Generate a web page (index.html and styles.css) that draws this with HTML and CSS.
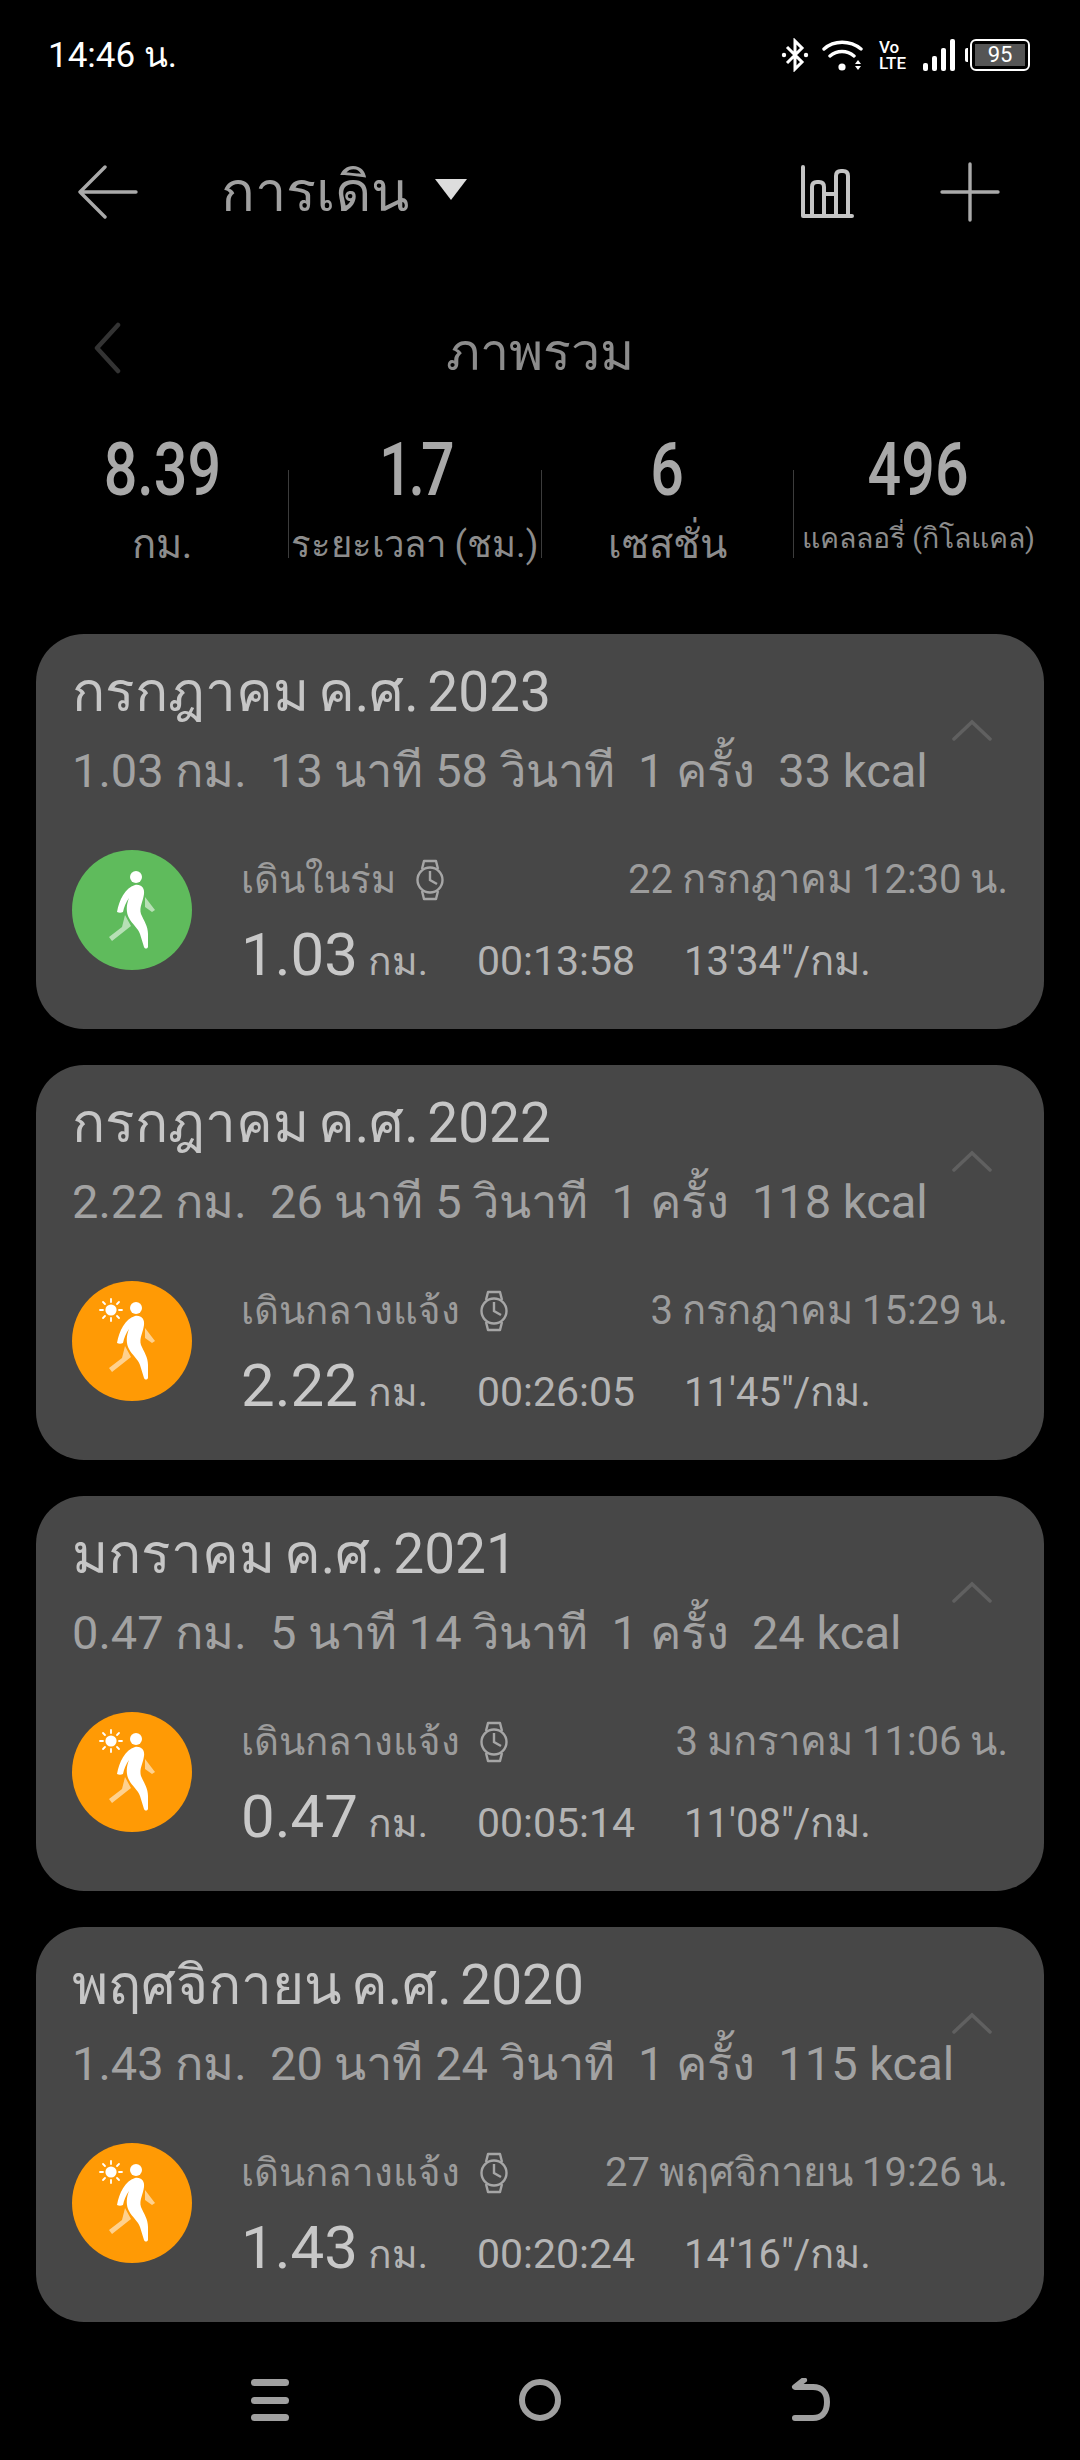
FILE: index.html
```html
<!DOCTYPE html>
<html lang="th">
<head>
    <meta charset="UTF-8">
    <meta name="viewport" content="width=device-width, initial-scale=1.0">
    <title>การเดิน</title>
    <link rel="stylesheet" href="styles.css">
</head>
<body>

    <svg class="defs" width="0" height="0">
        <symbol id="walker" viewBox="0 0 120 120">
            <circle cx="64" cy="27" r="6" fill="#fff"/>
            <path d="M73 47 L83 60 L80 62 L73 57 Z" fill="#fff" opacity="0.55"/>
            <path d="M53 65 L59 76 L40 91 L37 87 L50 77 Z" fill="#fff" opacity="0.55"/>
            <path d="M63 35 C69 34 73 38 72 44 C71 52 67 57 69 64 C72 71 76 76 76 84 L76 97 C75 99 73 99 72 97 L68 84 C66 78 60 74 57 68 C54 63 54 55 57 48 C54 52 52 57 51 62 C49 63 47 63 45 62 C47 50 53 38 63 35 Z" fill="#fff"/>
        </symbol>
        <symbol id="sun" viewBox="0 0 120 120">
            <circle cx="39" cy="29" r="5.6" fill="#fff"/>
            <path d="M39 18 V21 M39 37 V40 M28 29 H31 M47 29 H50 M31 21 L33 23 M45 35 L47 37 M31 37 L33 35 M45 23 L47 21" stroke="#fff" stroke-width="1.8" stroke-linecap="round"/>
        </symbol>
        <symbol id="watch" viewBox="0 0 28 42">
            <path d="M6 10 L8 2 H20 L22 10 M6 32 L8 40 H20 L22 32" fill="none" stroke="currentColor" stroke-width="2.4" stroke-linejoin="round"/>
            <circle cx="14" cy="21" r="12.5" fill="none" stroke="currentColor" stroke-width="2.4"/>
            <path d="M14 12 V21 L21 25" fill="none" stroke="currentColor" stroke-width="2.4"/>
        </symbol>
        <symbol id="chevron" viewBox="0 0 40 22">
            <path d="M2 20 L20 3 L38 20" fill="none" stroke="currentColor" stroke-width="3.5" stroke-linecap="round"/>
        </symbol>
    </svg>

    <div class="status-bar">
        <span class="clock">14:46 น.</span>
        <div class="status-icons">
            <svg class="ic-bt" width="28" height="34" viewBox="0 0 28 34">
                <path d="M6 9 L21 24 L14 31 V3 L21 10 L6 25" fill="none" stroke="#fff" stroke-width="3"/>
                <circle cx="3" cy="17" r="2.2" fill="#fff"/>
                <circle cx="25" cy="17" r="2.2" fill="#fff"/>
            </svg>
            <svg class="ic-wifi" width="41" height="33" viewBox="0 0 41 33">
                <path d="M2 10 C12 1 28 1 39 10 M8 17 C15 11 25 11 32 17" fill="none" stroke="#fff" stroke-width="3.4" stroke-linecap="round"/>
                <circle cx="20" cy="28" r="3.6" fill="#fff"/>
                <path d="M36 21 L39 25 H33 Z M33 27 H39 L36 31 Z" fill="#fff"/>
            </svg>
            <div class="volte"><span>Vo</span><span>LTE</span></div>
            <div class="signal">
                <i class="s1"></i><i class="s2"></i><i class="s3"></i><i class="s4"></i>
            </div>
            <div class="battery">
                <span class="battery-cap"></span>
                <span class="battery-body"><span class="battery-level">95</span></span>
            </div>
        </div>
    </div>

    <div class="toolbar">
        <svg class="ic-back" width="60" height="54" viewBox="0 0 60 54">
            <path d="M27 2 L2 27 L27 52 M2 27 H58" fill="none" stroke="#aaa" stroke-width="3.4" stroke-linecap="round" stroke-linejoin="round"/>
        </svg>
        <span class="toolbar-title">การเดิน</span>
        <span class="caret"></span>
        <svg class="ic-chart" width="54" height="54" viewBox="0 0 54 54">
            <path d="M3 2 V51 H52 M12 51 V22 Q12 17 17 17 H19 Q24 17 24 22 V51 M24 29 H36 M36 51 V11 Q36 6 41 6 H43 Q48 6 48 11 V51" fill="none" stroke="#c4c4c4" stroke-width="4" stroke-linejoin="round" stroke-linecap="round"/>
        </svg>
        <svg class="ic-plus" width="60" height="60" viewBox="0 0 60 60">
            <path d="M30 2 V58 M2 30 H58" fill="none" stroke="#aaa" stroke-width="3.4" stroke-linecap="round"/>
        </svg>
    </div>

    <div class="period">
        <svg class="ic-prev" width="28" height="52" viewBox="0 0 28 52">
            <path d="M25 3 L4 26 L25 49" fill="none" stroke="#333" stroke-width="4.5" stroke-linecap="round" stroke-linejoin="round"/>
        </svg>
        <span class="period-name">ภาพรวม</span>
    </div>

    <div class="stats">
        <div class="stat">
            <div class="stat-value"><span>8.39</span></div>
            <div class="stat-label">กม.</div>
        </div>
        <div class="stat">
            <div class="stat-value"><span class="tight">1.7</span></div>
            <div class="stat-label narrow">ระยะเวลา (ชม.)</div>
        </div>
        <div class="stat">
            <div class="stat-value"><span>6</span></div>
            <div class="stat-label">เซสชั่น</div>
        </div>
        <div class="stat">
            <div class="stat-value"><span>496</span></div>
            <div class="stat-label small">แคลลอรี่ (กิโลแคล)</div>
        </div>
    </div>

    <div class="cards">
        <div class="card">
            <svg class="ic-up"><use href="#chevron"/></svg>
            <div class="card-title">กรกฎาคม ค.ศ. 2023</div>
            <div class="card-sub">1.03 กม.&nbsp; 13 นาที 58 วินาที&nbsp; 1 ครั้ง&nbsp; 33 kcal</div>
            <div class="entry">
                <div class="badge green"><svg><use href="#walker"/></svg></div>
                <div class="entry-body">
                    <div class="entry-top">
                        <span class="entry-name">เดินในร่ม</span>
                        <svg class="ic-watch"><use href="#watch"/></svg>
                        <span class="entry-date">22 กรกฎาคม 12:30 น.</span>
                    </div>
                    <div class="entry-nums">
                        <span class="dist"><b>1.03</b> กม.</span>
                        <span class="dur">00:13:58</span>
                        <span class="pace">13'34"/กม.</span>
                    </div>
                </div>
            </div>
        </div>

        <div class="card">
            <svg class="ic-up"><use href="#chevron"/></svg>
            <div class="card-title">กรกฎาคม ค.ศ. 2022</div>
            <div class="card-sub">2.22 กม.&nbsp; 26 นาที 5 วินาที&nbsp; 1 ครั้ง&nbsp; 118 kcal</div>
            <div class="entry">
                <div class="badge orange"><svg><use href="#walker"/><use href="#sun"/></svg></div>
                <div class="entry-body">
                    <div class="entry-top">
                        <span class="entry-name">เดินกลางแจ้ง</span>
                        <svg class="ic-watch"><use href="#watch"/></svg>
                        <span class="entry-date">3 กรกฎาคม 15:29 น.</span>
                    </div>
                    <div class="entry-nums">
                        <span class="dist"><b>2.22</b> กม.</span>
                        <span class="dur">00:26:05</span>
                        <span class="pace">11'45"/กม.</span>
                    </div>
                </div>
            </div>
        </div>

        <div class="card">
            <svg class="ic-up"><use href="#chevron"/></svg>
            <div class="card-title">มกราคม ค.ศ. 2021</div>
            <div class="card-sub">0.47 กม.&nbsp; 5 นาที 14 วินาที&nbsp; 1 ครั้ง&nbsp; 24 kcal</div>
            <div class="entry">
                <div class="badge orange"><svg><use href="#walker"/><use href="#sun"/></svg></div>
                <div class="entry-body">
                    <div class="entry-top">
                        <span class="entry-name">เดินกลางแจ้ง</span>
                        <svg class="ic-watch"><use href="#watch"/></svg>
                        <span class="entry-date">3 มกราคม 11:06 น.</span>
                    </div>
                    <div class="entry-nums">
                        <span class="dist"><b>0.47</b> กม.</span>
                        <span class="dur">00:05:14</span>
                        <span class="pace">11'08"/กม.</span>
                    </div>
                </div>
            </div>
        </div>

        <div class="card">
            <svg class="ic-up"><use href="#chevron"/></svg>
            <div class="card-title">พฤศจิกายน ค.ศ. 2020</div>
            <div class="card-sub">1.43 กม.&nbsp; 20 นาที 24 วินาที&nbsp; 1 ครั้ง&nbsp; 115 kcal</div>
            <div class="entry">
                <div class="badge orange"><svg><use href="#walker"/><use href="#sun"/></svg></div>
                <div class="entry-body">
                    <div class="entry-top">
                        <span class="entry-name">เดินกลางแจ้ง</span>
                        <svg class="ic-watch"><use href="#watch"/></svg>
                        <span class="entry-date">27 พฤศจิกายน 19:26 น.</span>
                    </div>
                    <div class="entry-nums">
                        <span class="dist"><b>1.43</b> กม.</span>
                        <span class="dur">00:20:24</span>
                        <span class="pace">14'16"/กม.</span>
                    </div>
                </div>
            </div>
        </div>
    </div>

    <div class="nav-bar">
        <div class="nav-menu"><i></i><i></i><i></i></div>
        <div class="nav-home"></div>
        <svg class="nav-back" width="40" height="44" viewBox="0 0 40 44">
            <path d="M13 2 L4 9 H22 C31 9 36 15 36 24 C36 35 30 40 22 40 H4" fill="none" stroke="#a0a0a0" stroke-width="6" stroke-linecap="round" stroke-linejoin="round"/>
        </svg>
    </div>

</body>
</html>
```

FILE: styles.css
```css
* {
    box-sizing: border-box;
}
body {
    margin: 0;
    width: 1080px;
    height: 2460px;
    background: #000;
    font-family: Roboto, "Noto Sans", sans-serif;
    color: #a0a0a0;
    overflow: hidden;
}
.defs {
    position: absolute;
}

/* status bar */
.status-bar {
    height: 108px;
    padding: 38px 50px 0 48px;
    display: flex;
    justify-content: space-between;
    align-items: flex-start;
}
.clock {
    font-size: 35px;
    line-height: 36px;
    color: #fff;
}
.status-icons {
    display: flex;
    align-items: center;
    height: 34px;
}
.ic-wifi {
    margin-left: 13px;
}
.volte {
    margin-left: 16px;
    width: 32px;
    display: flex;
    flex-direction: column;
    font-size: 17px;
    line-height: 16px;
    font-weight: 500;
    color: #fff;
}
.signal {
    margin-left: 12px;
    display: flex;
    align-items: flex-end;
    gap: 4px;
    height: 32px;
}
.signal i {
    display: block;
    width: 5px;
    background: #fff;
    border-radius: 2px;
}
.s1 { height: 8px; }
.s2 { height: 15px; }
.s3 { height: 23px; }
.s4 { height: 32px; }
.battery {
    margin-left: 10px;
    display: flex;
    align-items: center;
}
.battery-cap {
    width: 3px;
    height: 14px;
    background: #fff;
    border-radius: 2px 0 0 2px;
    margin-right: 2px;
}
.battery-body {
    width: 60px;
    height: 32px;
    border: 2px solid #fff;
    border-radius: 6px;
    padding: 3px;
    display: flex;
}
.battery-level {
    flex: 1;
    background: #555;
    color: #fff;
    font-size: 22px;
    line-height: 22px;
    text-align: center;
}

/* toolbar */
.toolbar {
    height: 108px;
    padding: 60px 80px 0 78px;
    display: flex;
    align-items: center;
}
.toolbar-title {
    margin-left: 83px;
    font-size: 56px;
    line-height: 60px;
    color: #a0a0a0;
}
.caret {
    margin-left: 26px;
    margin-top: -6px;
    width: 0;
    height: 0;
    border-left: 16px solid transparent;
    border-right: 16px solid transparent;
    border-top: 21px solid #ddd;
}
.ic-chart {
    margin-left: auto;
}
.ic-plus {
    margin-left: 86px;
}

/* overview */
.period {
    position: relative;
    height: 82px;
    margin-top: 96px;
    display: flex;
    align-items: center;
    justify-content: center;
}
.ic-prev {
    position: absolute;
    left: 93px;
    top: 10px;
}
.period-name {
    font-size: 52px;
    line-height: 60px;
    color: #8c8c8c;
}
.stats {
    margin: 34px 36px 0;
    display: grid;
    grid-template-columns: 252px 253px 252px 251px;
}
.stat {
    position: relative;
    text-align: center;
}
.stat + .stat::before {
    content: "";
    position: absolute;
    left: 0;
    top: 42px;
    height: 88px;
    width: 1px;
    background: #3c3c3c;
}
.stat-value {
    padding-bottom: 3px;
    font-size: 74px;
    line-height: 84px;
    font-weight: 500;
    color: #a8a8a8;
}
.stat-value span {
    display: inline-block;
    transform: scaleX(0.8);
}
.stat-value .tight {
    letter-spacing: -5px;
}
.stat-label {
    margin-top: 4px;
    font-size: 40px;
    line-height: 52px;
    white-space: nowrap;
    color: #8c8c8c;
}
.stat-label.narrow {
    font-size: 36.5px;
}
.stat-label.small {
    font-size: 28.5px;
    line-height: 40px;
}

/* cards */
.cards {
    margin: 63px 36px 0;
    display: flex;
    flex-direction: column;
    gap: 36px;
}
.card {
    position: relative;
    height: 395px;
    padding: 24px 36px 0;
    background: #474747;
    border-radius: 48px;
}
.ic-up {
    position: absolute;
    right: 52px;
    top: 85px;
    width: 40px;
    height: 22px;
    color: #606060;
}
.card-title {
    font-size: 55px;
    word-spacing: -5px;
    line-height: 68px;
    color: #c6c6c6;
}
.card-sub {
    padding-top: 11px;
    font-size: 47px;
    line-height: 68px;
    color: #a2a2a2;
    white-space: nowrap;
}
.entry {
    margin-top: 45px;
    display: flex;
    align-items: flex-start;
}
.badge {
    width: 120px;
    height: 120px;
    border-radius: 50%;
    flex-shrink: 0;
}
.badge svg {
    display: block;
    width: 120px;
    height: 120px;
}
.badge.green {
    background: #5fbb5c;
}
.badge.orange {
    background: #ff9a05;
}
.entry-body {
    margin-left: 49px;
    flex: 1;
}
.entry-top {
    height: 60px;
    display: flex;
    align-items: center;
    color: #9c9c9c;
    font-size: 38.5px;
    line-height: 60px;
}
.ic-watch {
    margin-left: 20px;
    width: 28px;
    height: 42px;
    color: #a6a6a6;
}
.entry-date {
    margin-left: auto;
    font-size: 40px;
    word-spacing: -1px;
    white-space: nowrap;
}
.entry-nums {
    height: 90px;
    display: flex;
    align-items: baseline;
    font-size: 40px;
    line-height: 90px;
    color: #b4b4b4;
}
.dist {
    width: 236px;
    font-size: 39px;
}
.dist b {
    font-weight: 400;
    font-size: 60px;
    color: #c8c8c8;
}
.dur {
    width: 207px;
    font-size: 41px;
}

/* nav bar */
.nav-bar {
    position: relative;
    margin-top: 56px;
    height: 44px;
    padding: 0 249px 0 251px;
    display: flex;
    justify-content: space-between;
    align-items: center;
}
.nav-menu {
    width: 38px;
    height: 42px;
    display: flex;
    flex-direction: column;
    justify-content: space-between;
}
.nav-menu i {
    display: block;
    height: 7px;
    border-radius: 4px;
    background: #a0a0a0;
}
.nav-home {
    width: 42px;
    height: 42px;
    border: 6px solid #a0a0a0;
    border-radius: 50%;
}
```
